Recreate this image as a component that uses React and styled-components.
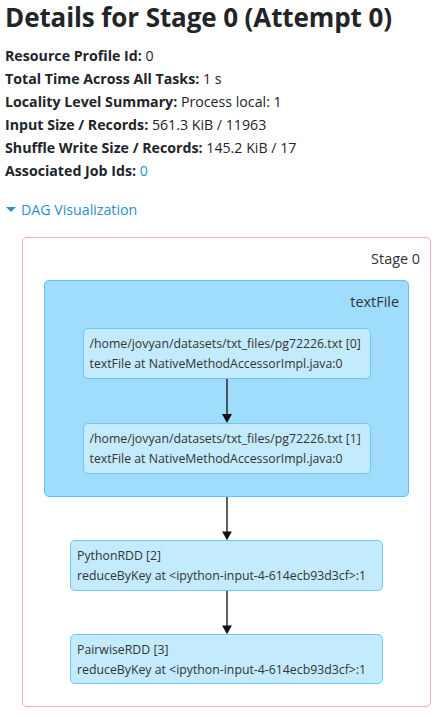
import React from 'react';
import styled, { createGlobalStyle } from 'styled-components';

const GlobalStyle = createGlobalStyle`
  html, body {
    margin: 0;
    padding: 0;
    background: #ffffff;
  }
  body {
    font-family: "Open Sans", "Noto Sans", sans-serif;
    color: #212529;
  }
`;

const Page = styled.div`
  padding: 0 5px;
  width: 442px;
  box-sizing: border-box;
`;

const Title = styled.h3`
  margin: 0;
  padding-top: 2px;
  font-size: 26px;
  line-height: 31px;
  font-weight: 700;
  color: #212529;
  letter-spacing: -0.1px;
`;

const Summary = styled.ul`
  list-style: none;
  margin: 0;
  padding: 11px 0 0 0;
`;

const Item = styled.li`
  font-size: 14.2px;
  line-height: 23px;
  color: #212529;
  white-space: nowrap;
  strong {
    font-weight: 700;
  }
`;

const Link = styled.a`
  color: #2b8fd3;
  text-decoration: none;
`;

const Toggle = styled.div`
  margin-top: 16px;
  display: flex;
  align-items: center;
  gap: 5px;
  font-size: 14.2px;
  line-height: 23px;
  color: #2b8fd3;
`;

const Caret = styled.span`
  width: 0;
  height: 0;
  border-left: 5px solid transparent;
  border-right: 5px solid transparent;
  border-top: 5px solid #2b8fd3;
  margin-left: 1px;
`;

const StageBox = styled.div`
  margin: 16px 6px 0 17px;
  border: 1px solid #ffa9b8;
  border-radius: 5px;
  padding: 10px 21px 22px 21px;
  display: flex;
  flex-direction: column;
  align-items: center;
  height: 470px;
  box-sizing: border-box;
`;

const BoxLabel = styled.div`
  align-self: flex-end;
  font-size: 14.4px;
  line-height: 22px;
  color: #333;
  margin-right: ${p => p.$inset || 0}px;
`;

const Cluster = styled.div`
  margin-top: 10px;
  align-self: stretch;
  background: #a0dcfc;
  border: 1px solid #5cc4f8;
  border-radius: 5px;
  padding: 10px 9px 22px 38px;
  display: flex;
  flex-direction: column;
  align-items: center;
  box-sizing: border-box;
  height: 217px;
`;

const Node = styled.div`
  width: ${p => p.$w}px;
  height: 51px;
  box-sizing: border-box;
  background: #c3ebfd;
  border: 1px solid #6cc9f7;
  border-radius: 5px;
  padding: 5px 0 0 6px;
  font-size: 12.3px;
  line-height: 20px;
  color: #333;
  white-space: nowrap;
  overflow: hidden;
`;

const NodeWrap = styled.div`
  align-self: stretch;
  display: flex;
  flex-direction: column;
  align-items: center;
  padding-right: ${p => p.$shift || 0}px;
`;

const Spacer = styled.div`
  height: ${p => p.$h}px;
`;

function Arrow() {
  return (
    <svg width="12" height="44" viewBox="0 0 12 44" style={{ display: 'block' }}>
      <line x1="6" y1="0" x2="6" y2="36" stroke="#333" strokeWidth="1.6" />
      <path d="M1 35 L11 35 L6 44 Z" fill="#111" />
    </svg>
  );
}

function RddNode({ w, name, site }) {
  return (
    <Node $w={w}>
      <div>{name}</div>
      <div>{site}</div>
    </Node>
  );
}

export default function App() {
  return (
    <Page>
      <GlobalStyle />
      <Title>Details for Stage 0 (Attempt 0)</Title>
      <Summary>
        <Item><strong>Resource Profile Id:</strong> 0</Item>
        <Item><strong>Total Time Across All Tasks:</strong> 1 s</Item>
        <Item><strong>Locality Level Summary:</strong> Process local: 1</Item>
        <Item><strong>Input Size / Records:</strong> 561.3 KiB / 11963</Item>
        <Item><strong>Shuffle Write Size / Records:</strong> 145.2 KiB / 17</Item>
        <Item><strong>Associated Job Ids:</strong> <Link href="#">0</Link></Item>
      </Summary>
      <Toggle>
        <Caret />
        <span>DAG Visualization</span>
      </Toggle>
      <StageBox>
        <BoxLabel $inset={-11}>Stage 0</BoxLabel>
        <Cluster>
          <BoxLabel>textFile</BoxLabel>
          <NodeWrap $shift={29}>
            <Spacer $h={15} />
            <RddNode w={288} name="/home/jovyan/datasets/txt_files/pg72226.txt [0]" site="textFile at NativeMethodAccessorImpl.java:0" />
            <Arrow />
            <RddNode w={288} name="/home/jovyan/datasets/txt_files/pg72226.txt [1]" site="textFile at NativeMethodAccessorImpl.java:0" />
          </NodeWrap>
        </Cluster>
        <Arrow />
        <RddNode w={313} name="PythonRDD [2]" site="reduceByKey at <ipython-input-4-614ecb93d3cf>:1" />
        <Arrow />
        <RddNode w={313} name="PairwiseRDD [3]" site="reduceByKey at <ipython-input-4-614ecb93d3cf>:1" />
      </StageBox>
    </Page>
  );
}
